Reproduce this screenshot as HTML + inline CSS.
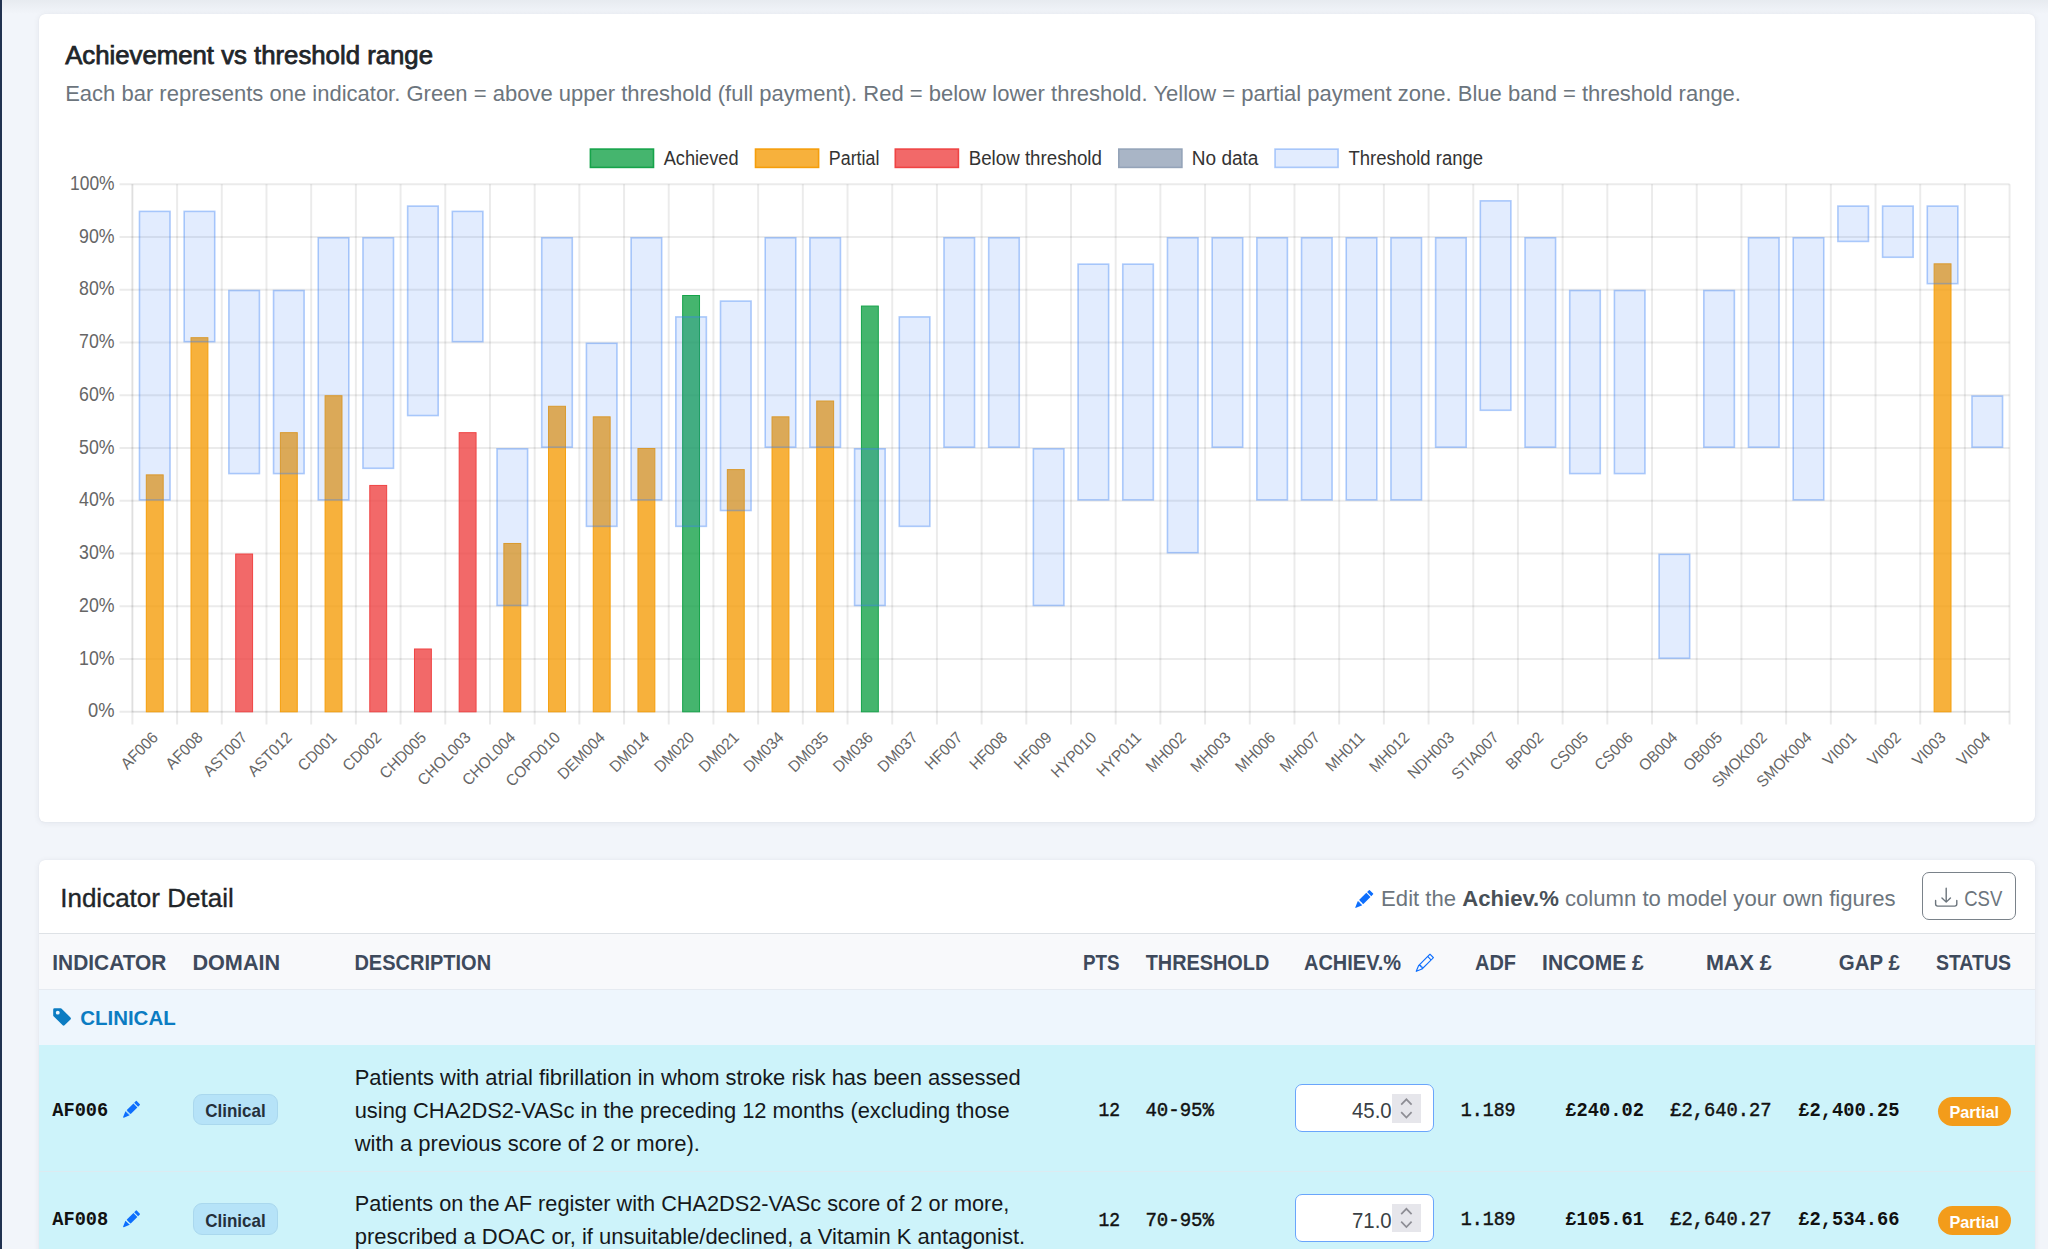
<!DOCTYPE html>
<html><head><meta charset="utf-8"><title>Achievement vs threshold range</title>
<style>
html,body{margin:0;padding:0}
body{width:2048px;height:1249px;overflow:hidden;position:relative;background:#f2f5fa;font-family:"Liberation Sans",sans-serif}
.topshade{position:absolute;left:0;top:0;width:2048px;height:14px;background:linear-gradient(#e7ebf0,#f2f5fa)}
.side{position:absolute;left:0;top:0;width:2px;height:1249px;background:#213250}
.card{position:absolute;left:39px;width:1996px;background:#fff;border-radius:6px;box-shadow:0 0 1px rgba(20,30,60,0.10),0 1px 6px rgba(20,30,60,0.07)}
#c1{top:13.5px;height:808.5px}
#c2{top:860px;height:420px;overflow:hidden}
.hdrline{position:absolute;left:39px;top:932.7px;width:1996px;height:1.6px;background:#dee2e6}
.thead{position:absolute;left:39px;top:934.3px;width:1996px;height:55px;background:#f8f9fb}
.grp{position:absolute;left:39px;top:988.5px;width:1996px;height:57px;background:#eef6fd;border-top:1.2px solid #e6ebf1;box-sizing:border-box}
.row{position:absolute;left:39px;width:1996px;background:#cdf3fa}
#r1{top:1045px;height:125.8px}
#r2{top:1172px;height:90px}
.rline{position:absolute;left:39px;top:1170.8px;width:1996px;height:1.4px;background:#dcebf1}
.badge{position:absolute;background:#b6e3f8;border:1.2px solid #aad8ee;border-radius:9px;box-sizing:border-box}
.pbadge{position:absolute;background:#f39c1a;border-radius:15px}
.inp{position:absolute;background:#fff;border:1.9px solid #6aa5fb;border-radius:7px;box-sizing:border-box}
.spin{position:absolute;background:#e6e6eb}
.csv{position:absolute;left:1922px;top:872px;width:94px;height:48px;border:1.6px solid #7a828a;border-radius:7px;box-sizing:border-box}
svg{position:absolute;left:0;top:0}
.yl{font-family:"Liberation Sans",sans-serif;font-size:19.5px;fill:#666}
.xl{font-family:"Liberation Sans",sans-serif;font-size:16px;fill:#666}
.lg{font-family:"Liberation Sans",sans-serif;font-size:19.5px;fill:#333}
</style></head>
<body>
<div class="topshade"></div>
<div class="side"></div>
<div class="card" id="c1"></div>
<div class="card" id="c2"></div>
<div class="hdrline"></div>
<div class="thead"></div>
<div class="grp"></div>
<div class="row" id="r1"></div>
<div class="rline"></div>
<div class="row" id="r2"></div>
<div class="badge" style="left:192.7px;top:1093.5px;width:85.7px;height:31.5px"></div>
<div class="badge" style="left:192.7px;top:1203px;width:85.7px;height:31.5px"></div>
<div class="inp" style="left:1295.3px;top:1084.2px;width:138.5px;height:48.2px"></div>
<div class="spin" style="left:1392px;top:1094.2px;width:29px;height:28.7px"></div>
<div class="inp" style="left:1295.3px;top:1193.5px;width:138.5px;height:48.7px"></div>
<div class="spin" style="left:1392px;top:1203.8px;width:29px;height:28.7px"></div>
<div class="pbadge" style="left:1938px;top:1097px;width:72.5px;height:28.6px"></div>
<div class="pbadge" style="left:1938px;top:1206.3px;width:72.5px;height:28.6px"></div>
<div class="csv"></div>
<svg width="2048" height="1249" viewBox="0 0 2048 1249">
<line x1="119.5" y1="711.80" x2="2009.60" y2="711.80" stroke="rgba(0,0,0,0.08)" stroke-width="2"/>
<line x1="119.5" y1="659.04" x2="2009.60" y2="659.04" stroke="rgba(0,0,0,0.08)" stroke-width="2"/>
<line x1="119.5" y1="606.28" x2="2009.60" y2="606.28" stroke="rgba(0,0,0,0.08)" stroke-width="2"/>
<line x1="119.5" y1="553.52" x2="2009.60" y2="553.52" stroke="rgba(0,0,0,0.08)" stroke-width="2"/>
<line x1="119.5" y1="500.76" x2="2009.60" y2="500.76" stroke="rgba(0,0,0,0.08)" stroke-width="2"/>
<line x1="119.5" y1="448.00" x2="2009.60" y2="448.00" stroke="rgba(0,0,0,0.08)" stroke-width="2"/>
<line x1="119.5" y1="395.24" x2="2009.60" y2="395.24" stroke="rgba(0,0,0,0.08)" stroke-width="2"/>
<line x1="119.5" y1="342.48" x2="2009.60" y2="342.48" stroke="rgba(0,0,0,0.08)" stroke-width="2"/>
<line x1="119.5" y1="289.72" x2="2009.60" y2="289.72" stroke="rgba(0,0,0,0.08)" stroke-width="2"/>
<line x1="119.5" y1="236.96" x2="2009.60" y2="236.96" stroke="rgba(0,0,0,0.08)" stroke-width="2"/>
<line x1="119.5" y1="184.20" x2="2009.60" y2="184.20" stroke="rgba(0,0,0,0.08)" stroke-width="2"/>
<line x1="132.40" y1="184.20" x2="132.40" y2="724.6" stroke="rgba(0,0,0,0.08)" stroke-width="2"/>
<line x1="177.10" y1="184.20" x2="177.10" y2="724.6" stroke="rgba(0,0,0,0.08)" stroke-width="2"/>
<line x1="221.79" y1="184.20" x2="221.79" y2="724.6" stroke="rgba(0,0,0,0.08)" stroke-width="2"/>
<line x1="266.49" y1="184.20" x2="266.49" y2="724.6" stroke="rgba(0,0,0,0.08)" stroke-width="2"/>
<line x1="311.18" y1="184.20" x2="311.18" y2="724.6" stroke="rgba(0,0,0,0.08)" stroke-width="2"/>
<line x1="355.88" y1="184.20" x2="355.88" y2="724.6" stroke="rgba(0,0,0,0.08)" stroke-width="2"/>
<line x1="400.57" y1="184.20" x2="400.57" y2="724.6" stroke="rgba(0,0,0,0.08)" stroke-width="2"/>
<line x1="445.27" y1="184.20" x2="445.27" y2="724.6" stroke="rgba(0,0,0,0.08)" stroke-width="2"/>
<line x1="489.96" y1="184.20" x2="489.96" y2="724.6" stroke="rgba(0,0,0,0.08)" stroke-width="2"/>
<line x1="534.66" y1="184.20" x2="534.66" y2="724.6" stroke="rgba(0,0,0,0.08)" stroke-width="2"/>
<line x1="579.35" y1="184.20" x2="579.35" y2="724.6" stroke="rgba(0,0,0,0.08)" stroke-width="2"/>
<line x1="624.05" y1="184.20" x2="624.05" y2="724.6" stroke="rgba(0,0,0,0.08)" stroke-width="2"/>
<line x1="668.74" y1="184.20" x2="668.74" y2="724.6" stroke="rgba(0,0,0,0.08)" stroke-width="2"/>
<line x1="713.44" y1="184.20" x2="713.44" y2="724.6" stroke="rgba(0,0,0,0.08)" stroke-width="2"/>
<line x1="758.13" y1="184.20" x2="758.13" y2="724.6" stroke="rgba(0,0,0,0.08)" stroke-width="2"/>
<line x1="802.83" y1="184.20" x2="802.83" y2="724.6" stroke="rgba(0,0,0,0.08)" stroke-width="2"/>
<line x1="847.52" y1="184.20" x2="847.52" y2="724.6" stroke="rgba(0,0,0,0.08)" stroke-width="2"/>
<line x1="892.22" y1="184.20" x2="892.22" y2="724.6" stroke="rgba(0,0,0,0.08)" stroke-width="2"/>
<line x1="936.91" y1="184.20" x2="936.91" y2="724.6" stroke="rgba(0,0,0,0.08)" stroke-width="2"/>
<line x1="981.61" y1="184.20" x2="981.61" y2="724.6" stroke="rgba(0,0,0,0.08)" stroke-width="2"/>
<line x1="1026.30" y1="184.20" x2="1026.30" y2="724.6" stroke="rgba(0,0,0,0.08)" stroke-width="2"/>
<line x1="1071.00" y1="184.20" x2="1071.00" y2="724.6" stroke="rgba(0,0,0,0.08)" stroke-width="2"/>
<line x1="1115.70" y1="184.20" x2="1115.70" y2="724.6" stroke="rgba(0,0,0,0.08)" stroke-width="2"/>
<line x1="1160.39" y1="184.20" x2="1160.39" y2="724.6" stroke="rgba(0,0,0,0.08)" stroke-width="2"/>
<line x1="1205.09" y1="184.20" x2="1205.09" y2="724.6" stroke="rgba(0,0,0,0.08)" stroke-width="2"/>
<line x1="1249.78" y1="184.20" x2="1249.78" y2="724.6" stroke="rgba(0,0,0,0.08)" stroke-width="2"/>
<line x1="1294.48" y1="184.20" x2="1294.48" y2="724.6" stroke="rgba(0,0,0,0.08)" stroke-width="2"/>
<line x1="1339.17" y1="184.20" x2="1339.17" y2="724.6" stroke="rgba(0,0,0,0.08)" stroke-width="2"/>
<line x1="1383.87" y1="184.20" x2="1383.87" y2="724.6" stroke="rgba(0,0,0,0.08)" stroke-width="2"/>
<line x1="1428.56" y1="184.20" x2="1428.56" y2="724.6" stroke="rgba(0,0,0,0.08)" stroke-width="2"/>
<line x1="1473.26" y1="184.20" x2="1473.26" y2="724.6" stroke="rgba(0,0,0,0.08)" stroke-width="2"/>
<line x1="1517.95" y1="184.20" x2="1517.95" y2="724.6" stroke="rgba(0,0,0,0.08)" stroke-width="2"/>
<line x1="1562.65" y1="184.20" x2="1562.65" y2="724.6" stroke="rgba(0,0,0,0.08)" stroke-width="2"/>
<line x1="1607.34" y1="184.20" x2="1607.34" y2="724.6" stroke="rgba(0,0,0,0.08)" stroke-width="2"/>
<line x1="1652.04" y1="184.20" x2="1652.04" y2="724.6" stroke="rgba(0,0,0,0.08)" stroke-width="2"/>
<line x1="1696.73" y1="184.20" x2="1696.73" y2="724.6" stroke="rgba(0,0,0,0.08)" stroke-width="2"/>
<line x1="1741.43" y1="184.20" x2="1741.43" y2="724.6" stroke="rgba(0,0,0,0.08)" stroke-width="2"/>
<line x1="1786.12" y1="184.20" x2="1786.12" y2="724.6" stroke="rgba(0,0,0,0.08)" stroke-width="2"/>
<line x1="1830.82" y1="184.20" x2="1830.82" y2="724.6" stroke="rgba(0,0,0,0.08)" stroke-width="2"/>
<line x1="1875.51" y1="184.20" x2="1875.51" y2="724.6" stroke="rgba(0,0,0,0.08)" stroke-width="2"/>
<line x1="1920.21" y1="184.20" x2="1920.21" y2="724.6" stroke="rgba(0,0,0,0.08)" stroke-width="2"/>
<line x1="1964.90" y1="184.20" x2="1964.90" y2="724.6" stroke="rgba(0,0,0,0.08)" stroke-width="2"/>
<line x1="2009.60" y1="184.20" x2="2009.60" y2="724.6" stroke="rgba(0,0,0,0.08)" stroke-width="2"/>
<line x1="132.40" y1="184.20" x2="132.40" y2="711.80" stroke="rgba(0,0,0,0.05)" stroke-width="1.6"/>
<line x1="132.40" y1="711.80" x2="2009.60" y2="711.80" stroke="rgba(0,0,0,0.05)" stroke-width="1.6"/>
<rect x="146.31" y="474.88" width="16.88" height="236.92" fill="rgba(245,158,11,0.8)" stroke="rgb(245,158,11)" stroke-width="1" />
<rect x="191.00" y="337.70" width="16.88" height="374.10" fill="rgba(245,158,11,0.8)" stroke="rgb(245,158,11)" stroke-width="1" />
<rect x="235.70" y="554.02" width="16.88" height="157.78" fill="rgba(239,68,68,0.8)" stroke="rgb(239,68,68)" stroke-width="1" />
<rect x="280.39" y="432.67" width="16.88" height="279.13" fill="rgba(245,158,11,0.8)" stroke="rgb(245,158,11)" stroke-width="1" />
<rect x="325.09" y="395.74" width="16.88" height="316.06" fill="rgba(245,158,11,0.8)" stroke="rgb(245,158,11)" stroke-width="1" />
<rect x="369.78" y="485.43" width="16.88" height="226.37" fill="rgba(239,68,68,0.8)" stroke="rgb(239,68,68)" stroke-width="1" />
<rect x="414.48" y="648.99" width="16.88" height="62.81" fill="rgba(239,68,68,0.8)" stroke="rgb(239,68,68)" stroke-width="1" />
<rect x="459.18" y="432.67" width="16.88" height="279.13" fill="rgba(239,68,68,0.8)" stroke="rgb(239,68,68)" stroke-width="1" />
<rect x="503.87" y="543.47" width="16.88" height="168.33" fill="rgba(245,158,11,0.8)" stroke="rgb(245,158,11)" stroke-width="1" />
<rect x="548.57" y="406.29" width="16.88" height="305.51" fill="rgba(245,158,11,0.8)" stroke="rgb(245,158,11)" stroke-width="1" />
<rect x="593.26" y="416.84" width="16.88" height="294.96" fill="rgba(245,158,11,0.8)" stroke="rgb(245,158,11)" stroke-width="1" />
<rect x="637.96" y="448.50" width="16.88" height="263.30" fill="rgba(245,158,11,0.8)" stroke="rgb(245,158,11)" stroke-width="1" />
<rect x="682.65" y="295.50" width="16.88" height="416.30" fill="rgba(22,163,74,0.8)" stroke="rgb(22,163,74)" stroke-width="1" />
<rect x="727.35" y="469.60" width="16.88" height="242.20" fill="rgba(245,158,11,0.8)" stroke="rgb(245,158,11)" stroke-width="1" />
<rect x="772.04" y="416.84" width="16.88" height="294.96" fill="rgba(245,158,11,0.8)" stroke="rgb(245,158,11)" stroke-width="1" />
<rect x="816.74" y="401.02" width="16.88" height="310.78" fill="rgba(245,158,11,0.8)" stroke="rgb(245,158,11)" stroke-width="1" />
<rect x="861.43" y="306.05" width="16.88" height="405.75" fill="rgba(22,163,74,0.8)" stroke="rgb(22,163,74)" stroke-width="1" />
<rect x="1934.12" y="263.84" width="16.88" height="447.96" fill="rgba(245,158,11,0.8)" stroke="rgb(245,158,11)" stroke-width="1" />
<rect x="139.46" y="211.38" width="30.58" height="288.58" fill="rgba(59,130,246,0.15)" stroke="rgba(59,130,246,0.4)" stroke-width="1.6"/>
<rect x="184.15" y="211.38" width="30.58" height="130.30" fill="rgba(59,130,246,0.15)" stroke="rgba(59,130,246,0.4)" stroke-width="1.6"/>
<rect x="228.85" y="290.52" width="30.58" height="183.06" fill="rgba(59,130,246,0.15)" stroke="rgba(59,130,246,0.4)" stroke-width="1.6"/>
<rect x="273.54" y="290.52" width="30.58" height="183.06" fill="rgba(59,130,246,0.15)" stroke="rgba(59,130,246,0.4)" stroke-width="1.6"/>
<rect x="318.24" y="237.76" width="30.58" height="262.20" fill="rgba(59,130,246,0.15)" stroke="rgba(59,130,246,0.4)" stroke-width="1.6"/>
<rect x="362.93" y="237.76" width="30.58" height="230.54" fill="rgba(59,130,246,0.15)" stroke="rgba(59,130,246,0.4)" stroke-width="1.6"/>
<rect x="407.63" y="206.10" width="30.58" height="209.44" fill="rgba(59,130,246,0.15)" stroke="rgba(59,130,246,0.4)" stroke-width="1.6"/>
<rect x="452.32" y="211.38" width="30.58" height="130.30" fill="rgba(59,130,246,0.15)" stroke="rgba(59,130,246,0.4)" stroke-width="1.6"/>
<rect x="497.02" y="448.80" width="30.58" height="156.68" fill="rgba(59,130,246,0.15)" stroke="rgba(59,130,246,0.4)" stroke-width="1.6"/>
<rect x="541.71" y="237.76" width="30.58" height="209.44" fill="rgba(59,130,246,0.15)" stroke="rgba(59,130,246,0.4)" stroke-width="1.6"/>
<rect x="586.41" y="343.28" width="30.58" height="183.06" fill="rgba(59,130,246,0.15)" stroke="rgba(59,130,246,0.4)" stroke-width="1.6"/>
<rect x="631.10" y="237.76" width="30.58" height="262.20" fill="rgba(59,130,246,0.15)" stroke="rgba(59,130,246,0.4)" stroke-width="1.6"/>
<rect x="675.80" y="316.90" width="30.58" height="209.44" fill="rgba(59,130,246,0.15)" stroke="rgba(59,130,246,0.4)" stroke-width="1.6"/>
<rect x="720.50" y="301.07" width="30.58" height="209.44" fill="rgba(59,130,246,0.15)" stroke="rgba(59,130,246,0.4)" stroke-width="1.6"/>
<rect x="765.19" y="237.76" width="30.58" height="209.44" fill="rgba(59,130,246,0.15)" stroke="rgba(59,130,246,0.4)" stroke-width="1.6"/>
<rect x="809.89" y="237.76" width="30.58" height="209.44" fill="rgba(59,130,246,0.15)" stroke="rgba(59,130,246,0.4)" stroke-width="1.6"/>
<rect x="854.58" y="448.80" width="30.58" height="156.68" fill="rgba(59,130,246,0.15)" stroke="rgba(59,130,246,0.4)" stroke-width="1.6"/>
<rect x="899.28" y="316.90" width="30.58" height="209.44" fill="rgba(59,130,246,0.15)" stroke="rgba(59,130,246,0.4)" stroke-width="1.6"/>
<rect x="943.97" y="237.76" width="30.58" height="209.44" fill="rgba(59,130,246,0.15)" stroke="rgba(59,130,246,0.4)" stroke-width="1.6"/>
<rect x="988.67" y="237.76" width="30.58" height="209.44" fill="rgba(59,130,246,0.15)" stroke="rgba(59,130,246,0.4)" stroke-width="1.6"/>
<rect x="1033.36" y="448.80" width="30.58" height="156.68" fill="rgba(59,130,246,0.15)" stroke="rgba(59,130,246,0.4)" stroke-width="1.6"/>
<rect x="1078.06" y="264.14" width="30.58" height="235.82" fill="rgba(59,130,246,0.15)" stroke="rgba(59,130,246,0.4)" stroke-width="1.6"/>
<rect x="1122.75" y="264.14" width="30.58" height="235.82" fill="rgba(59,130,246,0.15)" stroke="rgba(59,130,246,0.4)" stroke-width="1.6"/>
<rect x="1167.45" y="237.76" width="30.58" height="314.96" fill="rgba(59,130,246,0.15)" stroke="rgba(59,130,246,0.4)" stroke-width="1.6"/>
<rect x="1212.14" y="237.76" width="30.58" height="209.44" fill="rgba(59,130,246,0.15)" stroke="rgba(59,130,246,0.4)" stroke-width="1.6"/>
<rect x="1256.84" y="237.76" width="30.58" height="262.20" fill="rgba(59,130,246,0.15)" stroke="rgba(59,130,246,0.4)" stroke-width="1.6"/>
<rect x="1301.53" y="237.76" width="30.58" height="262.20" fill="rgba(59,130,246,0.15)" stroke="rgba(59,130,246,0.4)" stroke-width="1.6"/>
<rect x="1346.23" y="237.76" width="30.58" height="262.20" fill="rgba(59,130,246,0.15)" stroke="rgba(59,130,246,0.4)" stroke-width="1.6"/>
<rect x="1390.92" y="237.76" width="30.58" height="262.20" fill="rgba(59,130,246,0.15)" stroke="rgba(59,130,246,0.4)" stroke-width="1.6"/>
<rect x="1435.62" y="237.76" width="30.58" height="209.44" fill="rgba(59,130,246,0.15)" stroke="rgba(59,130,246,0.4)" stroke-width="1.6"/>
<rect x="1480.31" y="200.83" width="30.58" height="209.44" fill="rgba(59,130,246,0.15)" stroke="rgba(59,130,246,0.4)" stroke-width="1.6"/>
<rect x="1525.01" y="237.76" width="30.58" height="209.44" fill="rgba(59,130,246,0.15)" stroke="rgba(59,130,246,0.4)" stroke-width="1.6"/>
<rect x="1569.70" y="290.52" width="30.58" height="183.06" fill="rgba(59,130,246,0.15)" stroke="rgba(59,130,246,0.4)" stroke-width="1.6"/>
<rect x="1614.40" y="290.52" width="30.58" height="183.06" fill="rgba(59,130,246,0.15)" stroke="rgba(59,130,246,0.4)" stroke-width="1.6"/>
<rect x="1659.10" y="554.32" width="30.58" height="103.92" fill="rgba(59,130,246,0.15)" stroke="rgba(59,130,246,0.4)" stroke-width="1.6"/>
<rect x="1703.79" y="290.52" width="30.58" height="156.68" fill="rgba(59,130,246,0.15)" stroke="rgba(59,130,246,0.4)" stroke-width="1.6"/>
<rect x="1748.49" y="237.76" width="30.58" height="209.44" fill="rgba(59,130,246,0.15)" stroke="rgba(59,130,246,0.4)" stroke-width="1.6"/>
<rect x="1793.18" y="237.76" width="30.58" height="262.20" fill="rgba(59,130,246,0.15)" stroke="rgba(59,130,246,0.4)" stroke-width="1.6"/>
<rect x="1837.88" y="206.10" width="30.58" height="35.33" fill="rgba(59,130,246,0.15)" stroke="rgba(59,130,246,0.4)" stroke-width="1.6"/>
<rect x="1882.57" y="206.10" width="30.58" height="51.16" fill="rgba(59,130,246,0.15)" stroke="rgba(59,130,246,0.4)" stroke-width="1.6"/>
<rect x="1927.27" y="206.10" width="30.58" height="77.54" fill="rgba(59,130,246,0.15)" stroke="rgba(59,130,246,0.4)" stroke-width="1.6"/>
<rect x="1971.96" y="396.04" width="30.58" height="51.16" fill="rgba(59,130,246,0.15)" stroke="rgba(59,130,246,0.4)" stroke-width="1.6"/>
<text x="88.10" y="717.40" class="yl" textLength="26.5" lengthAdjust="spacingAndGlyphs">0%</text>
<text x="79.10" y="664.64" class="yl" textLength="35.5" lengthAdjust="spacingAndGlyphs">10%</text>
<text x="79.10" y="611.88" class="yl" textLength="35.5" lengthAdjust="spacingAndGlyphs">20%</text>
<text x="79.10" y="559.12" class="yl" textLength="35.5" lengthAdjust="spacingAndGlyphs">30%</text>
<text x="79.10" y="506.36" class="yl" textLength="35.5" lengthAdjust="spacingAndGlyphs">40%</text>
<text x="79.10" y="453.60" class="yl" textLength="35.5" lengthAdjust="spacingAndGlyphs">50%</text>
<text x="79.10" y="400.84" class="yl" textLength="35.5" lengthAdjust="spacingAndGlyphs">60%</text>
<text x="79.10" y="348.08" class="yl" textLength="35.5" lengthAdjust="spacingAndGlyphs">70%</text>
<text x="79.10" y="295.32" class="yl" textLength="35.5" lengthAdjust="spacingAndGlyphs">80%</text>
<text x="79.10" y="242.56" class="yl" textLength="35.5" lengthAdjust="spacingAndGlyphs">90%</text>
<text x="70.10" y="189.80" class="yl" textLength="44.5" lengthAdjust="spacingAndGlyphs">100%</text>
<text transform="translate(158.95,738.60) rotate(-45)" text-anchor="end" class="xl" textLength="44.78" lengthAdjust="spacingAndGlyphs">AF006</text>
<text transform="translate(203.64,738.60) rotate(-45)" text-anchor="end" class="xl" textLength="44.78" lengthAdjust="spacingAndGlyphs">AF008</text>
<text transform="translate(248.34,738.60) rotate(-45)" text-anchor="end" class="xl" textLength="54.92" lengthAdjust="spacingAndGlyphs">AST007</text>
<text transform="translate(293.03,738.60) rotate(-45)" text-anchor="end" class="xl" textLength="54.92" lengthAdjust="spacingAndGlyphs">AST012</text>
<text transform="translate(337.73,738.60) rotate(-45)" text-anchor="end" class="xl" textLength="47.32" lengthAdjust="spacingAndGlyphs">CD001</text>
<text transform="translate(382.42,738.60) rotate(-45)" text-anchor="end" class="xl" textLength="47.32" lengthAdjust="spacingAndGlyphs">CD002</text>
<text transform="translate(427.12,738.60) rotate(-45)" text-anchor="end" class="xl" textLength="58.29" lengthAdjust="spacingAndGlyphs">CHD005</text>
<text transform="translate(471.81,738.60) rotate(-45)" text-anchor="end" class="xl" textLength="67.60" lengthAdjust="spacingAndGlyphs">CHOL003</text>
<text transform="translate(516.51,738.60) rotate(-45)" text-anchor="end" class="xl" textLength="67.60" lengthAdjust="spacingAndGlyphs">CHOL004</text>
<text transform="translate(561.20,738.60) rotate(-45)" text-anchor="end" class="xl" textLength="69.28" lengthAdjust="spacingAndGlyphs">COPD010</text>
<text transform="translate(605.90,738.60) rotate(-45)" text-anchor="end" class="xl" textLength="59.14" lengthAdjust="spacingAndGlyphs">DEM004</text>
<text transform="translate(650.60,738.60) rotate(-45)" text-anchor="end" class="xl" textLength="49.00" lengthAdjust="spacingAndGlyphs">DM014</text>
<text transform="translate(695.29,738.60) rotate(-45)" text-anchor="end" class="xl" textLength="49.00" lengthAdjust="spacingAndGlyphs">DM020</text>
<text transform="translate(739.99,738.60) rotate(-45)" text-anchor="end" class="xl" textLength="49.00" lengthAdjust="spacingAndGlyphs">DM021</text>
<text transform="translate(784.68,738.60) rotate(-45)" text-anchor="end" class="xl" textLength="49.00" lengthAdjust="spacingAndGlyphs">DM034</text>
<text transform="translate(829.38,738.60) rotate(-45)" text-anchor="end" class="xl" textLength="49.00" lengthAdjust="spacingAndGlyphs">DM035</text>
<text transform="translate(874.07,738.60) rotate(-45)" text-anchor="end" class="xl" textLength="49.00" lengthAdjust="spacingAndGlyphs">DM036</text>
<text transform="translate(918.77,738.60) rotate(-45)" text-anchor="end" class="xl" textLength="49.00" lengthAdjust="spacingAndGlyphs">DM037</text>
<text transform="translate(963.46,738.60) rotate(-45)" text-anchor="end" class="xl" textLength="45.63" lengthAdjust="spacingAndGlyphs">HF007</text>
<text transform="translate(1008.16,738.60) rotate(-45)" text-anchor="end" class="xl" textLength="45.63" lengthAdjust="spacingAndGlyphs">HF008</text>
<text transform="translate(1052.85,738.60) rotate(-45)" text-anchor="end" class="xl" textLength="45.63" lengthAdjust="spacingAndGlyphs">HF009</text>
<text transform="translate(1097.55,738.60) rotate(-45)" text-anchor="end" class="xl" textLength="56.61" lengthAdjust="spacingAndGlyphs">HYP010</text>
<text transform="translate(1142.24,738.60) rotate(-45)" text-anchor="end" class="xl" textLength="55.49" lengthAdjust="spacingAndGlyphs">HYP011</text>
<text transform="translate(1186.94,738.60) rotate(-45)" text-anchor="end" class="xl" textLength="49.00" lengthAdjust="spacingAndGlyphs">MH002</text>
<text transform="translate(1231.63,738.60) rotate(-45)" text-anchor="end" class="xl" textLength="49.00" lengthAdjust="spacingAndGlyphs">MH003</text>
<text transform="translate(1276.33,738.60) rotate(-45)" text-anchor="end" class="xl" textLength="49.00" lengthAdjust="spacingAndGlyphs">MH006</text>
<text transform="translate(1321.02,738.60) rotate(-45)" text-anchor="end" class="xl" textLength="49.00" lengthAdjust="spacingAndGlyphs">MH007</text>
<text transform="translate(1365.72,738.60) rotate(-45)" text-anchor="end" class="xl" textLength="47.87" lengthAdjust="spacingAndGlyphs">MH011</text>
<text transform="translate(1410.41,738.60) rotate(-45)" text-anchor="end" class="xl" textLength="49.00" lengthAdjust="spacingAndGlyphs">MH012</text>
<text transform="translate(1455.11,738.60) rotate(-45)" text-anchor="end" class="xl" textLength="58.29" lengthAdjust="spacingAndGlyphs">NDH003</text>
<text transform="translate(1499.80,738.60) rotate(-45)" text-anchor="end" class="xl" textLength="59.15" lengthAdjust="spacingAndGlyphs">STIA007</text>
<text transform="translate(1544.50,738.60) rotate(-45)" text-anchor="end" class="xl" textLength="45.64" lengthAdjust="spacingAndGlyphs">BP002</text>
<text transform="translate(1589.20,738.60) rotate(-45)" text-anchor="end" class="xl" textLength="46.48" lengthAdjust="spacingAndGlyphs">CS005</text>
<text transform="translate(1633.89,738.60) rotate(-45)" text-anchor="end" class="xl" textLength="46.48" lengthAdjust="spacingAndGlyphs">CS006</text>
<text transform="translate(1678.59,738.60) rotate(-45)" text-anchor="end" class="xl" textLength="47.32" lengthAdjust="spacingAndGlyphs">OB004</text>
<text transform="translate(1723.28,738.60) rotate(-45)" text-anchor="end" class="xl" textLength="47.32" lengthAdjust="spacingAndGlyphs">OB005</text>
<text transform="translate(1767.98,738.60) rotate(-45)" text-anchor="end" class="xl" textLength="70.12" lengthAdjust="spacingAndGlyphs">SMOK002</text>
<text transform="translate(1812.67,738.60) rotate(-45)" text-anchor="end" class="xl" textLength="70.12" lengthAdjust="spacingAndGlyphs">SMOK004</text>
<text transform="translate(1857.37,738.60) rotate(-45)" text-anchor="end" class="xl" textLength="39.72" lengthAdjust="spacingAndGlyphs">VI001</text>
<text transform="translate(1902.06,738.60) rotate(-45)" text-anchor="end" class="xl" textLength="39.72" lengthAdjust="spacingAndGlyphs">VI002</text>
<text transform="translate(1946.76,738.60) rotate(-45)" text-anchor="end" class="xl" textLength="39.72" lengthAdjust="spacingAndGlyphs">VI003</text>
<text transform="translate(1991.45,738.60) rotate(-45)" text-anchor="end" class="xl" textLength="39.72" lengthAdjust="spacingAndGlyphs">VI004</text>
<rect x="590.40" y="149.1" width="63.1" height="18.3" fill="rgba(22,163,74,0.8)" stroke="rgb(22,163,74)" stroke-width="1.6"/>
<text x="663.70" y="165.1" class="lg" textLength="74.8" lengthAdjust="spacingAndGlyphs">Achieved</text>
<rect x="755.50" y="149.1" width="63.1" height="18.3" fill="rgba(245,158,11,0.8)" stroke="rgb(245,158,11)" stroke-width="1.6"/>
<text x="828.80" y="165.1" class="lg" textLength="50.6" lengthAdjust="spacingAndGlyphs">Partial</text>
<rect x="895.30" y="149.1" width="63.1" height="18.3" fill="rgba(239,68,68,0.8)" stroke="rgb(239,68,68)" stroke-width="1.6"/>
<text x="968.70" y="165.1" class="lg" textLength="133.2" lengthAdjust="spacingAndGlyphs">Below threshold</text>
<rect x="1118.80" y="149.1" width="63.1" height="18.3" fill="rgba(148,163,184,0.8)" stroke="rgb(148,163,184)" stroke-width="1.6"/>
<text x="1191.80" y="165.1" class="lg" textLength="66.6" lengthAdjust="spacingAndGlyphs">No data</text>
<rect x="1275.00" y="149.1" width="63.1" height="18.3" fill="rgba(59,130,246,0.15)" stroke="rgba(59,130,246,0.4)" stroke-width="1.6"/>
<text x="1348.40" y="165.1" class="lg" textLength="134.7" lengthAdjust="spacingAndGlyphs">Threshold range</text>
<text x="65.20" y="64.30" font-family="Liberation Sans" font-size="25" font-weight="normal" fill="#212529" textLength="367.80" lengthAdjust="spacingAndGlyphs" stroke="#212529" stroke-width="0.75">Achievement vs threshold range</text>
<text x="65.20" y="100.60" font-family="Liberation Sans" font-size="22" font-weight="normal" fill="#6c757d" textLength="1675.80" lengthAdjust="spacingAndGlyphs">Each bar represents one indicator. Green = above upper threshold (full payment). Red = below lower threshold. Yellow = partial payment zone. Blue band = threshold range.</text>
<text x="60.20" y="907.30" font-family="Liberation Sans" font-size="26" font-weight="normal" fill="#212529" textLength="173.50" lengthAdjust="spacingAndGlyphs" stroke="#212529" stroke-width="0.35">Indicator Detail</text>
<text x="1381.1" y="906.1" font-family="Liberation Sans" font-size="22.5" fill="#6c757d" textLength="514.5" lengthAdjust="spacingAndGlyphs">Edit the <tspan font-weight="bold" fill="#495057">Achiev.%</tspan> column to model your own figures</text>
<text x="1964.20" y="906.00" font-family="Liberation Sans" font-size="22" font-weight="normal" fill="#6c757d" textLength="38.10" lengthAdjust="spacingAndGlyphs">CSV</text>
<text x="52.30" y="970.20" font-family="Liberation Sans" font-size="21.5" font-weight="bold" fill="#3e4a5c" textLength="114.10" lengthAdjust="spacingAndGlyphs">INDICATOR</text>
<text x="192.40" y="970.20" font-family="Liberation Sans" font-size="21.5" font-weight="bold" fill="#3e4a5c" textLength="87.80" lengthAdjust="spacingAndGlyphs">DOMAIN</text>
<text x="354.40" y="970.20" font-family="Liberation Sans" font-size="21.5" font-weight="bold" fill="#3e4a5c" textLength="136.70" lengthAdjust="spacingAndGlyphs">DESCRIPTION</text>
<text x="1082.90" y="970.20" font-family="Liberation Sans" font-size="21.5" font-weight="bold" fill="#3e4a5c" textLength="36.60" lengthAdjust="spacingAndGlyphs">PTS</text>
<text x="1145.70" y="970.20" font-family="Liberation Sans" font-size="21.5" font-weight="bold" fill="#3e4a5c" textLength="123.60" lengthAdjust="spacingAndGlyphs">THRESHOLD</text>
<text x="1304.00" y="970.20" font-family="Liberation Sans" font-size="21.5" font-weight="bold" fill="#3e4a5c" textLength="97.00" lengthAdjust="spacingAndGlyphs">ACHIEV.%</text>
<text x="1475.00" y="970.20" font-family="Liberation Sans" font-size="21.5" font-weight="bold" fill="#3e4a5c" textLength="41.00" lengthAdjust="spacingAndGlyphs">ADF</text>
<text x="1542.10" y="970.20" font-family="Liberation Sans" font-size="21.5" font-weight="bold" fill="#3e4a5c" textLength="101.70" lengthAdjust="spacingAndGlyphs">INCOME £</text>
<text x="1705.90" y="970.20" font-family="Liberation Sans" font-size="21.5" font-weight="bold" fill="#3e4a5c" textLength="65.90" lengthAdjust="spacingAndGlyphs">MAX £</text>
<text x="1838.80" y="970.20" font-family="Liberation Sans" font-size="21.5" font-weight="bold" fill="#3e4a5c" textLength="61.00" lengthAdjust="spacingAndGlyphs">GAP £</text>
<text x="1935.90" y="970.20" font-family="Liberation Sans" font-size="21.5" font-weight="bold" fill="#3e4a5c" textLength="75.10" lengthAdjust="spacingAndGlyphs">STATUS</text>
<text x="80.20" y="1025.00" font-family="Liberation Sans" font-size="20.5" font-weight="bold" fill="#0b7cc2" textLength="95.50" lengthAdjust="spacingAndGlyphs">CLINICAL</text>
<text x="52.30" y="1115.50" font-family="Liberation Mono" font-size="20.3" font-weight="bold" fill="#111" textLength="55.90" lengthAdjust="spacingAndGlyphs">AF006</text>
<text x="205.20" y="1117.30" font-family="Liberation Sans" font-size="18.6" font-weight="bold" fill="#25303b" textLength="60.50" lengthAdjust="spacingAndGlyphs">Clinical</text>
<text x="354.70" y="1085.20" font-family="Liberation Sans" font-size="22.5" font-weight="normal" fill="#15181b" textLength="666.10" lengthAdjust="spacingAndGlyphs">Patients with atrial fibrillation in whom stroke risk has been assessed</text>
<text x="354.70" y="1117.90" font-family="Liberation Sans" font-size="22.5" font-weight="normal" fill="#15181b" textLength="655.00" lengthAdjust="spacingAndGlyphs">using CHA2DS2-VASc in the preceding 12 months (excluding those</text>
<text x="354.70" y="1151.00" font-family="Liberation Sans" font-size="22.5" font-weight="normal" fill="#15181b" textLength="345.30" lengthAdjust="spacingAndGlyphs">with a previous score of 2 or more).</text>
<text x="1098.40" y="1116.00" font-family="Liberation Mono" font-size="20.3" font-weight="normal" fill="#111" textLength="21.60" lengthAdjust="spacingAndGlyphs" stroke="#111" stroke-width="0.45">12</text>
<text x="1145.40" y="1116.00" font-family="Liberation Mono" font-size="20.3" font-weight="normal" fill="#111" textLength="68.60" lengthAdjust="spacingAndGlyphs" stroke="#111" stroke-width="0.45">40-95%</text>
<text x="1352.00" y="1118.00" font-family="Liberation Sans" font-size="22.5" font-weight="normal" fill="#3a3f44" textLength="39.70" lengthAdjust="spacingAndGlyphs">45.0</text>
<text x="1460.70" y="1115.90" font-family="Liberation Mono" font-size="20.3" font-weight="normal" fill="#111" textLength="54.90" lengthAdjust="spacingAndGlyphs" stroke="#111" stroke-width="0.45">1.189</text>
<text x="1565.30" y="1115.60" font-family="Liberation Mono" font-size="20.3" font-weight="bold" fill="#111" textLength="78.70" lengthAdjust="spacingAndGlyphs">£240.02</text>
<text x="1670.20" y="1115.60" font-family="Liberation Mono" font-size="20.3" font-weight="normal" fill="#111" textLength="101.40" lengthAdjust="spacingAndGlyphs" stroke="#111" stroke-width="0.45">£2,640.27</text>
<text x="1798.20" y="1115.90" font-family="Liberation Mono" font-size="20.3" font-weight="bold" fill="#111" textLength="101.40" lengthAdjust="spacingAndGlyphs">£2,400.25</text>
<text x="1949.40" y="1118.40" font-family="Liberation Sans" font-size="16.5" font-weight="bold" fill="#fff" textLength="49.70" lengthAdjust="spacingAndGlyphs">Partial</text>
<text x="52.30" y="1225.00" font-family="Liberation Mono" font-size="20.3" font-weight="bold" fill="#111" textLength="55.90" lengthAdjust="spacingAndGlyphs">AF008</text>
<text x="205.20" y="1226.80" font-family="Liberation Sans" font-size="18.6" font-weight="bold" fill="#25303b" textLength="60.50" lengthAdjust="spacingAndGlyphs">Clinical</text>
<text x="354.70" y="1210.60" font-family="Liberation Sans" font-size="22.5" font-weight="normal" fill="#15181b" textLength="654.70" lengthAdjust="spacingAndGlyphs">Patients on the AF register with CHA2DS2-VASc score of 2 or more,</text>
<text x="354.70" y="1244.00" font-family="Liberation Sans" font-size="22.5" font-weight="normal" fill="#15181b" textLength="670.50" lengthAdjust="spacingAndGlyphs">prescribed a DOAC or, if unsuitable/declined, a Vitamin K antagonist.</text>
<text x="1098.40" y="1225.50" font-family="Liberation Mono" font-size="20.3" font-weight="normal" fill="#111" textLength="21.60" lengthAdjust="spacingAndGlyphs" stroke="#111" stroke-width="0.45">12</text>
<text x="1145.40" y="1225.50" font-family="Liberation Mono" font-size="20.3" font-weight="normal" fill="#111" textLength="68.60" lengthAdjust="spacingAndGlyphs" stroke="#111" stroke-width="0.45">70-95%</text>
<text x="1352.00" y="1227.50" font-family="Liberation Sans" font-size="22.5" font-weight="normal" fill="#3a3f44" textLength="39.70" lengthAdjust="spacingAndGlyphs">71.0</text>
<text x="1460.70" y="1225.40" font-family="Liberation Mono" font-size="20.3" font-weight="normal" fill="#111" textLength="54.90" lengthAdjust="spacingAndGlyphs" stroke="#111" stroke-width="0.45">1.189</text>
<text x="1565.30" y="1225.10" font-family="Liberation Mono" font-size="20.3" font-weight="bold" fill="#111" textLength="78.70" lengthAdjust="spacingAndGlyphs">£105.61</text>
<text x="1670.20" y="1225.10" font-family="Liberation Mono" font-size="20.3" font-weight="normal" fill="#111" textLength="101.40" lengthAdjust="spacingAndGlyphs" stroke="#111" stroke-width="0.45">£2,640.27</text>
<text x="1798.20" y="1225.40" font-family="Liberation Mono" font-size="20.3" font-weight="bold" fill="#111" textLength="101.40" lengthAdjust="spacingAndGlyphs">£2,534.66</text>
<text x="1949.40" y="1227.90" font-family="Liberation Sans" font-size="16.5" font-weight="bold" fill="#fff" textLength="49.70" lengthAdjust="spacingAndGlyphs">Partial</text>
<path transform="translate(123.10,1100.90) scale(1.0563,1.0500)" d="M12.854.146a.5.5 0 0 0-.707 0L10.5 1.793 14.207 5.5l1.647-1.646a.5.5 0 0 0 0-.708l-3-3zm.646 6.061L9.793 2.5 3.293 9H3.5a.5.5 0 0 1 .5.5v.5h.5a.5.5 0 0 1 .5.5v.5h.5a.5.5 0 0 1 .5.5v.5h.5a.5.5 0 0 1 .5.5v.207l6.5-6.5zm-7.468 7.468A.5.5 0 0 1 6 13.5V13h-.5a.5.5 0 0 1-.5-.5V12h-.5a.5.5 0 0 1-.5-.5V11h-.5a.5.5 0 0 1-.5-.5V10h-.5a.499.499 0 0 1-.175-.032l-.179.178a.5.5 0 0 0-.11.168l-2 5a.5.5 0 0 0 .65.65l5-2a.5.5 0 0 0 .168-.11l.178-.178z" fill="#0d6efd"/>
<path transform="translate(123.10,1210.40) scale(1.0563,1.0500)" d="M12.854.146a.5.5 0 0 0-.707 0L10.5 1.793 14.207 5.5l1.647-1.646a.5.5 0 0 0 0-.708l-3-3zm.646 6.061L9.793 2.5 3.293 9H3.5a.5.5 0 0 1 .5.5v.5h.5a.5.5 0 0 1 .5.5v.5h.5a.5.5 0 0 1 .5.5v.5h.5a.5.5 0 0 1 .5.5v.207l6.5-6.5zm-7.468 7.468A.5.5 0 0 1 6 13.5V13h-.5a.5.5 0 0 1-.5-.5V12h-.5a.5.5 0 0 1-.5-.5V11h-.5a.5.5 0 0 1-.5-.5V10h-.5a.499.499 0 0 1-.175-.032l-.179.178a.5.5 0 0 0-.11.168l-2 5a.5.5 0 0 0 .65.65l5-2a.5.5 0 0 0 .168-.11l.178-.178z" fill="#0d6efd"/>
<path transform="translate(1355.30,890.00) scale(1.1250,1.1187)" d="M12.854.146a.5.5 0 0 0-.707 0L10.5 1.793 14.207 5.5l1.647-1.646a.5.5 0 0 0 0-.708l-3-3zm.646 6.061L9.793 2.5 3.293 9H3.5a.5.5 0 0 1 .5.5v.5h.5a.5.5 0 0 1 .5.5v.5h.5a.5.5 0 0 1 .5.5v.5h.5a.5.5 0 0 1 .5.5v.207l6.5-6.5zm-7.468 7.468A.5.5 0 0 1 6 13.5V13h-.5a.5.5 0 0 1-.5-.5V12h-.5a.5.5 0 0 1-.5-.5V11h-.5a.5.5 0 0 1-.5-.5V10h-.5a.499.499 0 0 1-.175-.032l-.179.178a.5.5 0 0 0-.11.168l-2 5a.5.5 0 0 0 .65.65l5-2a.5.5 0 0 0 .168-.11l.178-.178z" fill="#0d6efd"/>
<path transform="translate(1415.70,953.70) scale(1.1437,1.1375)" d="M12.146.146a.5.5 0 0 1 .708 0l3 3a.5.5 0 0 1 0 .708l-10 10a.5.5 0 0 1-.168.11l-5 2a.5.5 0 0 1-.65-.65l2-5a.5.5 0 0 1 .11-.168l10-10zM11.207 2.5 13.5 4.793 14.793 3.5 12.5 1.207 11.207 2.5zm1.586 3L10.5 3.207 4 9.707V10h.5a.5.5 0 0 1 .5.5v.5h.5a.5.5 0 0 1 .5.5v.5h.293l6.5-6.5zm-9.761 5.175-.106.106-1.528 3.821 3.821-1.528.106-.106A.5.5 0 0 1 5 12.5V12h-.5a.5.5 0 0 1-.5-.5V11h-.5a.5.5 0 0 1-.468-.325z" fill="#0d6efd"/>
<path transform="translate(51.90,1006.91) scale(1.3000,1.2857)" d="M2 1a1 1 0 0 0-1 1v4.586a1 1 0 0 0 .293.707l7 7a1 1 0 0 0 1.414 0l4.586-4.586a1 1 0 0 0 0-1.414l-7-7A1 1 0 0 0 6.586 1H2zm4 3.5a1.5 1.5 0 1 1-3 0 1.5 1.5 0 0 1 3 0z" fill="#0b7cc2"/>
<path transform="translate(1934.90,886.22) scale(1.4125,1.3786)" d="M.5 9.9a.5.5 0 0 1 .5.5v2.5a1 1 0 0 0 1 1h12a1 1 0 0 0 1-1v-2.5a.5.5 0 0 1 1 0v2.5a2 2 0 0 1-2 2H2a2 2 0 0 1-2-2v-2.5a.5.5 0 0 1 .5-.5z M7.646 11.854a.5.5 0 0 0 .708 0l3-3a.5.5 0 0 0-.708-.708L8.5 10.293V1.5a.5.5 0 0 0-1 0v8.793L5.354 8.146a.5.5 0 1 0-.708.708l3 3z" fill="#6c757d"/>
<polyline points="1401.2,1104.6 1406.4,1099.3 1411.6,1104.6" fill="none" stroke="#8d8d94" stroke-width="1.7"/>
<polyline points="1401.2,1112.2 1406.4,1117.5 1411.6,1112.2" fill="none" stroke="#8d8d94" stroke-width="1.7"/>
<polyline points="1401.2,1214.1 1406.4,1208.8 1411.6,1214.1" fill="none" stroke="#8d8d94" stroke-width="1.7"/>
<polyline points="1401.2,1221.7 1406.4,1227.0 1411.6,1221.7" fill="none" stroke="#8d8d94" stroke-width="1.7"/>
</svg>
</body></html>
